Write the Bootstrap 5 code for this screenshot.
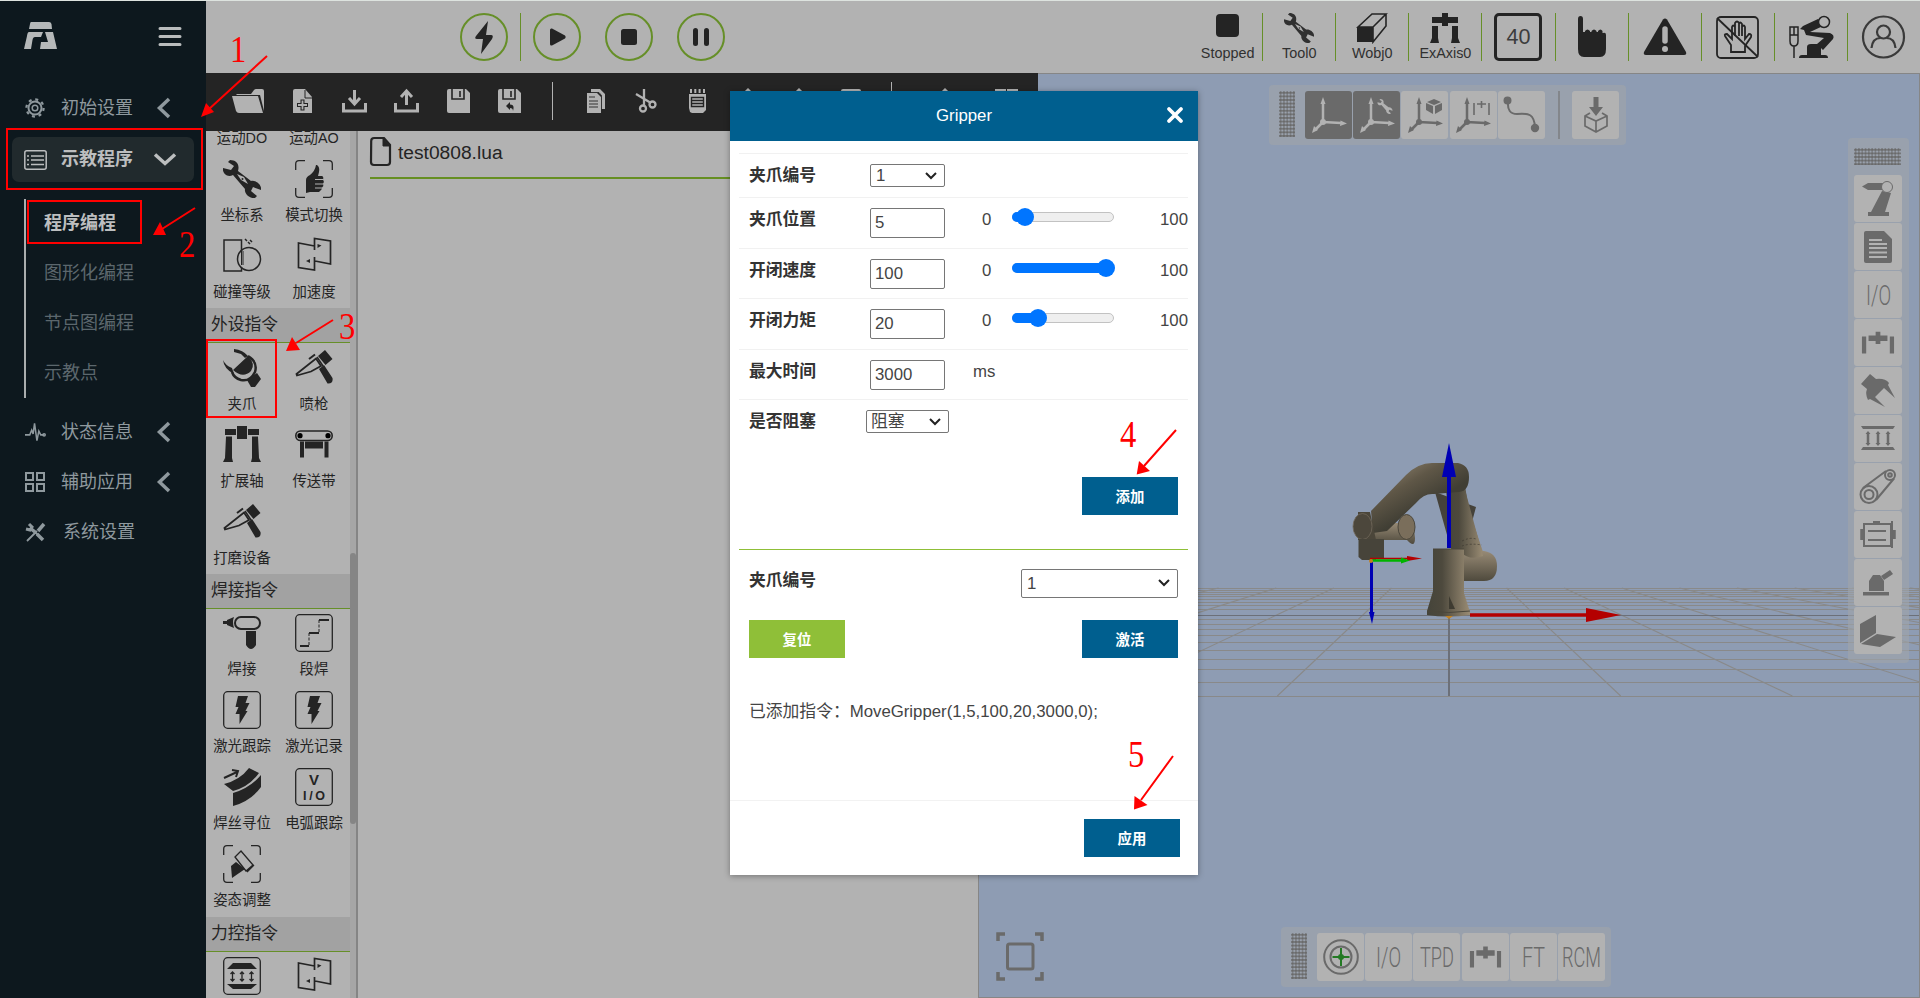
<!DOCTYPE html>
<html lang="zh-CN">
<head>
<meta charset="utf-8">
<meta name="viewport" content="width=device-width, initial-scale=1">
<title>示教程序</title>
<link href="https://cdn.jsdelivr.net/npm/bootstrap@5.3.0/dist/css/bootstrap.min.css" rel="stylesheet">
<style>
body{font-family:"Liberation Sans","Noto Sans CJK SC",sans-serif;color:#242424;background:#b2b2b2;width:1920px;height:998px;overflow:hidden;border-top:1px solid #dde3df}
svg{display:block;overflow:visible;flex:none}
/* sidebar */
.side{width:206px;background:#0d181e;color:#8f999e;font-size:18px;flex:none}
.side-top{height:82px;padding:21px 24px 0 24px}
.side-item{height:50px;padding-left:25px;position:relative}
.side-item .lbl{margin-left:16px;width:96px}
.side-item.on{width:182px;height:45px;margin:4px 0 0 12px;padding-left:12px;background:#212a2d;border-radius:7px;color:#bcbebf;font-weight:700}
.side-item.on .lbl{margin-left:14px;width:93px}
.side-sub{margin:17px 0 9px 24px;border-left:2px solid #a9adae;height:199px;color:#5c676d}
.side-sub a{display:flex;align-items:center;height:49.8px;padding-left:18px;color:inherit;text-decoration:none}
.side-sub a.on{color:#bcbebf;font-weight:700}
/* header */
.head{height:72px;background:#b2b2b2;flex:none}
.ring{width:48px;height:48px;border:2px solid #668f28;border-radius:50%}
.vsep{width:1px;height:48px;background:#668f28}
.stat{width:73.1px;height:48px;font-size:14.4px;line-height:15px;border-left:1px solid #668f28;color:#303030}
.stat:first-child{border-left:0}
.stat:not(:last-child){position:relative}
.speed{width:48px;height:48px;border:3px solid #242424;border-radius:5px;font-size:21.6px;line-height:42px;color:#3c3c3c}
/* editor side */
.left{width:772px;flex:none}
.tools{width:832px;height:58px;background:#242424;color:#b2b2b2;position:relative;z-index:2;padding:0 0 2px 26px;flex:none}
.tools .bar{width:1px;height:38px;background:#b2b2b2}
.palette{width:144px;overflow:hidden;flex:none}
.p-head{height:35px;background:#a2a2a2;border-bottom:1px solid #668f28;font-size:16.8px;line-height:33px;padding-left:5px}
.p-grid{display:grid;grid-template-columns:72px 72px}
.p-item{height:76.9px;padding-top:5.500px;display:flex;flex-direction:column;align-items:center;font-size:14.4px;line-height:21.6px;gap:7px;white-space:nowrap;color:#242424}
.p-item.cut{height:23.5px;padding-top:0;justify-content:flex-end;padding-bottom:5px}
.track{width:6px;background:#a6a6a6;padding-top:422px;flex:none}
.track i{display:block;height:271px;background:#858585;border-radius:3px}
.edge{width:2px;background:#858585;flex:none}
.tabline{margin-left:12px;height:48px;border-bottom:2px solid #668f22;font-size:19.2px;padding-bottom:11px}
/* 3D view */
.view{background:#8e9cb3;border:1px solid #868686;position:relative;overflow:hidden}
.scene{position:absolute;left:-1px;top:-1px}
.dock{position:absolute;background:rgba(160,165,170,.62);border-radius:4px;display:flex;color:#6a6a6a}
.dock .key{width:47px;height:47px;background:#b2b2b2;border-radius:3px;display:flex;align-items:center;justify-content:center}
.dock .key.dark{background:#6a6a6a;color:#b2b2b2}
.grip{background:radial-gradient(circle,#6a6a6a 1.2px,transparent 1.7px) 0 0/3.3px 3.6px}
.dock-top{left:290px;top:11px;width:357px;height:60px;padding:6px 0 0 10px}
.dock-right{left:869px;top:64px;width:61px;height:525px;padding-left:6px;padding-top:10px;flex-direction:column}
.dock-bottom{left:302px;top:853px;width:330px;height:60px;padding:6px 0 0 10px}
.dock-right .key{width:48px;margin-bottom:1px;flex:none}
.dock-top .key,.dock-bottom .key{height:48px;width:47px;margin-right:1.2px}
.frame{position:absolute;left:17px;top:858px}
/* dialog */
.dlg{position:absolute;left:730px;top:91px;width:468px;height:784px;background:#fff;z-index:5;box-shadow:0 1px 6px rgba(0,0,0,.35);font-size:16.8px;color:#333;display:flex;flex-direction:column}
.dlg-head{height:50px;background:#005f8f;color:#fff;position:relative;line-height:49px;flex:none}
.dlg-head svg{position:absolute;right:15.500px;top:16px}
.dlg-body{padding:12px 10px 0 9px;height:660px;border-bottom:1px solid #f2f2f2}
.f-row{display:grid;grid-template-columns:131px 75px 58px 102px 1fr;border-top:1px solid #f1f1f1;height:50.5px;align-items:start;padding-top:10px}
.f-row b{padding-left:10px;line-height:23px}
.f-row .n{line-height:23px;color:#444;margin-left:-1px}
.box{border:1px solid #767676;border-radius:2px;height:30px;line-height:28px;padding-left:4px;color:#444;background:#fff}
.sel{height:23px;line-height:21px;padding:0 7px 0 5px;display:flex;align-items:center;justify-content:space-between}
.rail{height:10px;margin-top:4px;border:1px solid #c2c2c2;background:#efefef;border-radius:5px;position:relative}
.rail i{position:absolute;left:-1px;top:-1px;height:10px;border-radius:5px;background:#0075ff}
.rail i::after{content:"";position:absolute;right:-9px;top:-4px;width:18px;height:18px;border-radius:50%;background:#0075ff}
.act{width:96px;height:38px;border:0;border-radius:0;background:#005f8f;color:#fff;font-weight:700;font-size:14.4px;padding:3px 0 0}
.act.go{background:#8fbf38}
.notes{position:absolute;left:0;top:-1px;z-index:9;pointer-events:none}
.notes text{font-family:"Liberation Serif",serif;font-size:38px;fill:#f00}
</style>
</head>
<body>
<svg width="0" height="0" class="position-absolute">
<defs>
<symbol id="wrench" viewBox="0 0 38 38"><path fill="currentColor" d="M0 8C-1 13 4 18 10 15L22 29C21 33 26 39 32 38L34 36 28 31 30 27 38 30C39 25 33 20 28 21L15 11C17 4 13 0 7 0L5 2 11 6 8 10Z"/><path fill="#b2b2b2" d="M14 14l7 3 4 7-7-4z"/><circle cx="19.500" cy="19" r="1" fill="currentColor"/></symbol>
<symbol id="corners" viewBox="0 0 38 38"><path fill="none" stroke="currentColor" stroke-width="1.300" d="M.7 10V4Q.7.7 4 .7h6M28 .7h6q3.300 0 3.300 3.300v6M37.300 28v6q0 3.300-3.300 3.300h-6M10 37.300H4Q.7 37.300.7 34v-6"/></symbol>
<symbol id="frame" viewBox="0 0 38 38"><rect x=".7" y=".7" width="36.600" height="36.600" rx="4" fill="none" stroke="currentColor" stroke-width="1.300"/></symbol>
<symbol id="accel" viewBox="0 0 38 38"><path fill="none" stroke="currentColor" stroke-width="1.700" d="M19.500 13V1.500L35.500 4v23l-15.500-3M19.500 9L3.500 6v24.500l16 2.500v-13"/><path d="M22.500 7l4 1.500-4 2.500zM15 22l-4 2 4 2z" fill="currentColor"/></symbol>
<symbol id="gun" viewBox="0 0 38 38"><path fill="none" stroke="currentColor" stroke-width="1.800" d="M1.500 25L21 9.500l5 7.500L16 22.500 2 26.500z"/><path stroke="currentColor" stroke-width="2" d="M14 10l6-4.500"/><path fill="currentColor" d="M23 7l7-6 7.500 9-7 6zM24 20l5-4 8.500 13q1 6-5 5.500z"/><path stroke="currentColor" stroke-width="1.500" d="M22 8l6 9"/></symbol>
<symbol id="gantry" viewBox="0 0 38 38"><path fill="currentColor" d="M14 0h10v13H14zM2 3h11v6H2zM25 3h11v6H25zM3 10.500h6V32l1 4H0l2-4zM29 10.500h6L36 32l2 4H28l1-4z"/></symbol>
<symbol id="bolt" viewBox="0 0 38 38"><path fill="currentColor" d="M15 5h10l-2.500 7h4l-4 8h2L16.500 33v-10h-4l3-7h-3z"/></symbol>
<symbol id="chev" viewBox="0 0 12 8"><path fill="none" stroke="#222" stroke-width="2" d="M1 1l5 5 5-5"/></symbol>
<symbol id="sgantry" viewBox="0 0 36 24"><path fill="currentColor" d="M1 5h4.500v18H1zM30.500 5H35v18h-4.500zM8 4h7.500V0h5v4H28v6h-7.500v3h-5v-3H8z"/></symbol>
<symbol id="axes" viewBox="0 0 36 36"><path fill="none" stroke="currentColor" stroke-width="2.500" d="M12 25V6M12 25l18 1M12 25L4 33"/><path fill="currentColor" d="M12 0l2.500 7h-5zM36 26.500l-7 2.500.5-5.500zM1 36l2-7 4 4z"/><circle cx="12" cy="25" r="3" fill="currentColor"/></symbol>
</defs>
</svg>

<div class="d-flex h-100">
  <nav class="side">
    <div class="side-top d-flex justify-content-between">
      <svg width="33" height="27" viewBox="0 0 33 27" fill="#b5b8b9"><path d="M7 0h18q2 0 2.500 2L28 7H5L6 2q.3-2 1-2zM5 10h14l-2 5h-6q-2 0-2.500 3L7 27H0L3 14q.5-4 2-4zM21 10h8l4 17H16l1-7h7z"/></svg>
      <svg width="24" height="20" viewBox="0 0 24 20" class="mt-1" stroke="#b9bcbd" stroke-width="3" stroke-linecap="round"><path d="M2 2.500h20M2 10.500h20M2 18.500h20"/></svg>
    </div>
    <div class="side-item d-flex align-items-center">
      <svg width="20" height="20" viewBox="0 0 20 20" fill="none" stroke="currentColor"><circle cx="10" cy="10" r="6.500" stroke-width="2"/><circle cx="10" cy="10" r="2.800" stroke-width="1.500"/><circle cx="10" cy="10" r="8.600" stroke-width="2.200" stroke-dasharray="3 3.750"/></svg>
      <span class="lbl">初始设置</span>
      <svg width="13" height="20" viewBox="0 0 13 20" fill="none" stroke="currentColor" stroke-width="3.500"><path d="M12 1L2.500 10 12 19"/></svg>
    </div>
    <div class="side-item on d-flex align-items-center">
      <svg width="23" height="20" viewBox="0 0 23 20" fill="none" stroke="currentColor" stroke-width="1.500"><rect x=".8" y=".8" width="21.400" height="18.400" rx="2"/><path d="M7 6h13M7 10h13M7 14.500h13M3 6h2M3 10h2M3 14.500h2"/></svg>
      <span class="lbl">示教程序</span>
      <svg width="22" height="13" viewBox="0 0 22 13" fill="none" stroke="currentColor" stroke-width="3.500"><path d="M1 1.500l10 9 10-9"/></svg>
    </div>
    <div class="side-sub"><a class="on">程序编程</a><a>图形化编程</a><a>节点图编程</a><a>示教点</a></div>
    <div class="side-item d-flex align-items-center">
      <svg width="21" height="20" viewBox="0 0 22 20" fill="none" stroke="currentColor" stroke-width="1.600"><path d="M0 13h5l2-5 1.500 4L10 1l2.500 18L14.500 9l2 4H20"/><circle cx="20" cy="13" r="1.200"/></svg>
      <span class="lbl" style="margin-left:15px">状态信息</span>
      <svg width="13" height="20" viewBox="0 0 13 20" fill="none" stroke="currentColor" stroke-width="3.500"><path d="M12 1L2.500 10 12 19"/></svg>
    </div>
    <div class="side-item d-flex align-items-center">
      <svg width="20" height="20" viewBox="0 0 20 20" fill="none" stroke="currentColor" stroke-width="2"><path d="M1 1h7v7H1zM12 1h7v7h-7zM1 12h7v7H1zM12 12h7v7h-7z"/></svg>
      <span class="lbl">辅助应用</span>
      <svg width="13" height="20" viewBox="0 0 13 20" fill="none" stroke="currentColor" stroke-width="3.500"><path d="M12 1L2.500 10 12 19"/></svg>
    </div>
    <div class="side-item d-flex align-items-center">
      <svg width="21" height="20" viewBox="0 0 21 20" stroke="currentColor" fill="none"><path stroke-width="3.500" d="M5 6l5 4M12 12l6 6M13 9l6-7"/><path stroke-width="1.800" d="M2 19l10-10M7 7l7 7"/><path stroke-width="3" d="M4 2l3 3-2 3-4-1"/></svg>
      <span class="lbl" style="margin-left:17px">系统设置</span>
    </div>
  </nav>

  <div class="flex-grow-1 d-flex flex-column">
    <header class="head d-flex align-items-center">
      <div class="d-flex align-items-center" style="padding-left:254px">
        <div class="ring d-flex align-items-center justify-content-center"><svg width="18" height="33" viewBox="0 0 18 33" fill="#242424"><path d="M13 0L1 15q-2 3 1 3h6L6 33 17 18q2-4-1-4h-5z"/></svg></div>
        <span class="vsep" style="margin:0 12px"></span>
        <div class="ring d-flex align-items-center justify-content-center"><svg width="16" height="18" viewBox="0 0 16 18" fill="#242424" style="margin-left:2px"><path d="M0 2q0-2 2-1.500l13 7q1.500 1.500 0 3L2 17.500Q0 18 0 16z"/></svg></div>
        <div class="ring d-flex align-items-center justify-content-center" style="margin:0 24px"><svg width="16" height="16"><rect width="16" height="16" rx="2.500" fill="#242424"/></svg></div>
        <div class="ring d-flex align-items-center justify-content-center"><svg width="16" height="18" fill="#242424"><rect width="5" height="18" rx="2.500"/><rect x="11" width="5" height="18" rx="2.500"/></svg></div>
      </div>
      <div class="d-flex ms-auto">
        <div class="stat d-flex flex-column align-items-center justify-content-end ps-1"><svg width="23" height="23" style="margin-bottom:9px"><rect width="23" height="23" rx="4" fill="#242424"/></svg>Stopped</div>
        <div class="stat d-flex flex-column align-items-center justify-content-end"><svg width="30" height="30" style="margin-bottom:3px"><use href="#wrench"/></svg>Tool0</div>
        <div class="stat d-flex flex-column align-items-center justify-content-end"><svg width="30" height="30" viewBox="0 0 30 30" style="margin-bottom:3px"><path d="M1 14L15 1h14L16 14zM29 1v12L16 29V14" fill="none" stroke="#242424" stroke-width="1.600"/><path d="M0 14h16v15H0z" fill="#242424"/></svg>Wobj0</div>
        <div class="stat d-flex flex-column align-items-center justify-content-end"><svg width="30" height="30" viewBox="0 0 30 30" style="margin-bottom:3px" fill="#242424"><path d="M12 0h6v4h10v6H18v3h-6v-3H2V4h10zM2 13h6v12l1 5H0l2-5zM22 13h6v12l2 5h-9l1-5z"/></svg>ExAxis0</div>
        <div class="stat d-flex align-items-center justify-content-center"><div class="speed text-center">40</div></div>
        <div class="stat d-flex align-items-center justify-content-center"><svg width="28" height="42" viewBox="0 0 28 42" fill="#242424"><path d="M0 3q0-3 2.500-3T5 3v13h2v-1q2.500-3 5 0v1h1.500v-1q2.500-3 5 0v1H20v-1q2.500-3 4.500 0v2h.5q3-1 3 2v14q0 8-6 8H6q-6 0-6-8z"/></svg></div>
        <div class="stat d-flex align-items-center justify-content-center"><svg width="44" height="38" viewBox="0 0 44 38"><path fill="#242424" d="M20 1.500q2-2 4 0L43 34q1 3-2 3H3q-3 0-2-3z"/><path d="M22 11v12" stroke="#b2b2b2" stroke-width="5.500" stroke-linecap="round"/><circle cx="22" cy="31" r="3" fill="#b2b2b2"/></svg></div>
        <div class="stat d-flex align-items-center justify-content-center"><svg width="43" height="43" viewBox="0 0 43 43" fill="none" stroke="#242424" stroke-width="1.800"><rect x="1" y="1" width="41" height="41" rx="4"/><path d="M1 2l41 39"/><path d="M15 36h14v-6l6-9q1-3-2-3l-4 5V11q-1-3-3 0v9-12q-2-3-3 0v12-13q-2-3-4 0v13-9q-2-3-3 0v12l-5-5q-3 0-2 2l6 9z"/></svg></div>
        <div class="stat d-flex align-items-center justify-content-center"><svg width="44" height="43" viewBox="0 0 44 43" fill="#242424"><path d="M10 42q0-3 3-3h23q3 0 3 3zM18 40V31q0-3 4-3h6q4 0 4 3v9zM11 13l3-3 15-7 5 7-13 6 20 1q5 2 3 6L34 34l-6-6 7-6-18-3-2-5z"/><circle cx="35" cy="6" r="5.500" fill="#b2b2b2" stroke="#242424" stroke-width="1.500"/><path d="M1 11h8v14q0 5-4 5t-4-5zM1 19h8M5 11v8M5 30v12" fill="none" stroke="#242424" stroke-width="1.500"/></svg></div>
        <div class="stat d-flex align-items-center justify-content-center"><svg width="44" height="44" viewBox="0 0 44 44" fill="none" stroke="#3a3a3a" stroke-width="2.200"><circle cx="21.500" cy="22" r="20.500"/><circle cx="21.500" cy="17" r="6.500"/><path d="M9.500 33q1-10 9-10M33.500 33q-1-10-9-10"/></svg></div>
      </div>
    </header>

    <div class="d-flex flex-grow-1" style="min-height:0">
      <div class="left d-flex flex-column">
        <div class="tools d-flex align-items-center">
          <svg width="32" height="24" viewBox="0 0 32 24" fill="currentColor"><path d="M4 5h15l3-4q1-1 2-1h6q2 0 2 2v20l-4-16H5zM0 7h26l5 17H7q-2 0-3-2z"/></svg>
          <svg width="19" height="24" viewBox="0 0 19 24" style="margin-left:29px"><path fill="currentColor" d="M0 2q0-2 2-2h10l7 8v16H0z"/><path d="M9.500 10.500v11M4 16h11" stroke="#242424" stroke-width="4"/><path d="M9.500 11.500v9M5 16h9" stroke="currentColor" stroke-width="1.800"/><path d="M12 1v8h7" stroke="#242424" fill="none"/></svg>
          <svg width="25" height="24" viewBox="0 0 25 24" style="margin-left:30px" fill="none" stroke="currentColor" stroke-width="3"><path d="M1.500 14v8h22v-8M12.500 1v13M7 9l5.500 6L18 9"/></svg>
          <svg width="25" height="24" viewBox="0 0 25 24" style="margin-left:27px" fill="none" stroke="currentColor" stroke-width="3"><path d="M1.500 14v8h22v-8M12.500 16V3M7 8l5.500-6L18 8"/></svg>
          <svg width="23" height="24" viewBox="0 0 23 24" style="margin-left:28px"><path fill="currentColor" d="M0 2q0-2 2-2h17l4 4v20H2q-2 0-2-2z"/><path d="M5 0v10h12V0M13 2v6" fill="none" stroke="#242424" stroke-width="1.600"/></svg>
          <svg width="23" height="24" viewBox="0 0 23 24" style="margin-left:28px"><path fill="currentColor" d="M0 2q0-2 2-2h17l4 4v20H2q-2 0-2-2z"/><path d="M5 0v10h12V0M13 2v6" fill="none" stroke="#242424" stroke-width="1.600"/><path d="M8 17l4-4v2.500q5 0 3 6.500 0-3-3-3v2z" fill="#242424"/></svg>
          <span class="bar" style="margin:0 34px 0 31px"></span>
          <svg width="18" height="24" viewBox="0 0 18 24"><path fill="currentColor" d="M4 0h9l5 5v15h-3V7l-4-4H4zM0 4h10l4 4v16H0z"/><path d="M2 8h6M2 12h9M2 15h9M2 18h9M4 3.500h8l2.500 3V20" stroke="#333" stroke-width="1" fill="none"/></svg>
          <svg width="22" height="24" viewBox="0 0 22 24" style="margin-left:30px" fill="none" stroke="currentColor" stroke-width="2.300"><path d="M1 5l15 9M9 0l0 17"/><circle cx="17.500" cy="15.500" r="3"/><circle cx="8" cy="19.500" r="3"/></svg>
          <svg width="17" height="24" viewBox="0 0 17 24" style="margin-left:32px"><path fill="currentColor" d="M0 5h17v16l-3 3H3l-2-1-1-4z"/><path d="M2 0v4M6.300 0v4M10.600 0v4M15 0v4" stroke="currentColor" stroke-width="2"/><path d="M2.500 8.500h12v9h-12zM3 11.500h11M3 14.500h11" fill="none" stroke="#242424" stroke-width="1.400"/></svg>
          <svg width="12" height="24" viewBox="0 0 12 24" style="margin-left:36px" fill="none" stroke="currentColor" stroke-width="3"><path d="M6 24V2M1 6l5-5 5 5"/></svg>
          <svg width="12" height="24" viewBox="0 0 12 24" style="margin-left:39px" fill="none" stroke="currentColor" stroke-width="3"><path d="M6 24V2M1 6l5-5 5 5"/></svg>
          <svg width="20" height="24" style="margin-left:36px"><rect width="20" height="24" rx="2" fill="currentColor"/></svg>
          <span class="bar" style="margin:0 47px 0 30px"></span>
          <svg width="12" height="24" viewBox="0 0 12 24" fill="none" stroke="currentColor" stroke-width="3"><path d="M6 24V2M1 6l5-5 5 5"/></svg>
          <svg width="23" height="24" viewBox="0 0 23 24" style="margin-left:44px" fill="none" stroke="currentColor" stroke-width="2"><path d="M1 1h9v8H1zM13 1h9v8h-9zM1 14h9v8H1z"/></svg>
        </div>
        <div class="d-flex flex-grow-1" style="min-height:0">
          <div class="palette">
            <div class="p-grid">
              <div class="p-item cut">运动DO</div><div class="p-item cut">运动AO</div>
              <div class="p-item"><svg width="38" height="38"><use href="#wrench"/></svg>坐标系</div>
              <div class="p-item"><svg width="38" height="38"><use href="#corners"/><path fill="#242424" d="M11 20q0-3 4-5 5-4 6-10h1q3 2 2 7l-1 4h4q2 1 1 3.500 1.500 2 0 4 1 2-1 4 0 2-2 3.500l-1 1h-9l-4 1z"/><path d="M20 19.500h8M20 24h8M20 28h7" stroke="#b2b2b2"/></svg>模式切换</div>
              <div class="p-item"><svg width="38" height="38" fill="none" stroke="#242424" stroke-width="1.500"><path d="M18.500 14V3H1v31h17.500v-4"/><circle cx="26" cy="22" r="11.500"/><path d="M18.500 14v14M20 14v14" stroke-width="1"/><path d="M22 2l2 2M25 5l2 2M27 3l2 2"/></svg>碰撞等级</div>
              <div class="p-item"><svg width="38" height="38"><use href="#accel"/></svg>加速度</div>
            </div>
            <div class="p-head">外设指令</div>
            <div class="p-grid">
              <div class="p-item"><svg width="38" height="38"><path fill="#242424" d="M11 0q9 1 14 7l-3 2-4-4-7-2zM0 11q2 5 9 8l2 6Q1 20 0 11zM10 21L25 7q8 8 3 15-8 8-18-1z"/><path d="M25 7q10 6 7 16-5 10-14 8-7-2-9-8" fill="none" stroke="#242424" stroke-width="2.500"/><path fill="#242424" d="M24 31l10-7 4 6-6 8h-4z"/></svg>夹爪</div>
              <div class="p-item"><svg width="38" height="38"><use href="#gun"/></svg>喷枪</div>
              <div class="p-item"><svg width="38" height="38"><use href="#gantry"/></svg>扩展轴</div>
              <div class="p-item"><svg width="38" height="38"><rect x=".8" y="5" width="36.400" height="9.500" rx="4.700" fill="none" stroke="#242424" stroke-width="1.600"/><circle cx="5" cy="9.700" r="2.600"/><circle cx="33" cy="9.700" r="2.600"/><path fill="#242424" d="M5 15.500h4v16H5zM10 15.500h18v7H10zM29.500 15.500h4v16h-4z"/></svg>传送带</div>
              <div class="p-item"><svg width="38" height="38"><use href="#gun"/></svg>打磨设备</div>
            </div>
            <div class="p-head">焊接指令</div>
            <div class="p-grid">
              <div class="p-item"><svg width="38" height="38"><rect x="12" y="3" width="25" height="12" rx="6" fill="none" stroke="#242424" stroke-width="2"/><path fill="#242424" d="M23 17h10v14q-5 8-10 0zM0 7h4V6l7-3q-2 5 0 11l-7-3v-1H0z"/></svg>焊接</div>
              <div class="p-item"><svg width="38" height="38"><use href="#frame"/><path d="M5 32h9M14 19h10M24 6h10" stroke="#242424" stroke-width="2"/><path d="M14 31V19M24 18V6" stroke="#242424" stroke-dasharray="3 1.500"/></svg>段焊</div>
              <div class="p-item"><svg width="38" height="38"><use href="#frame"/><use href="#bolt"/></svg>激光跟踪</div>
              <div class="p-item"><svg width="38" height="38"><use href="#frame"/><use href="#bolt"/></svg>激光记录</div>
              <div class="p-item"><svg width="38" height="38"><path fill="#242424" d="M1 16Q17 12 26 0l10 5Q26 19 10 23zM10 25Q27 20 38 7v12Q28 33 10 38z"/><path d="M1 10l13-6M9 2l6 1-2 6" fill="none" stroke="#242424" stroke-width="2"/></svg>焊丝寻位</div>
              <div class="p-item"><svg width="38" height="38" fill="#242424" font-weight="700" text-anchor="middle"><use href="#frame"/><text x="19" y="17" font-size="15">V</text><text x="19" y="32" font-size="12.500" textLength="22">I/O</text></svg>电弧跟踪</div>
              <div class="p-item"><svg width="38" height="38"><use href="#corners"/><path d="M8 21l5-4 9 7-13 9z" fill="#242424"/><path d="M12 12l6-6 12 14-7 6zM24 27l7-7" fill="#b2b2b2" stroke="#242424" stroke-width="1.300"/></svg>姿态调整</div>
            </div>
            <div class="p-head">力控指令</div>
            <div class="p-grid">
              <div class="p-item"><svg width="38" height="38"><use href="#frame"/><path fill="#242424" d="M10 6h18l6 6H4zM4 27h30l-6 5H10z"/><path d="M9.500 15v9M19 15v9M28.500 15v9M7.500 17l2-2 2 2M17 17l2-2 2 2M26.500 17l2-2 2 2M7.500 22l2 2 2-2M17 22l2 2 2-2M26.500 22l2 2 2-2" fill="none" stroke="#242424" stroke-width="1.300"/></svg></div>
              <div class="p-item"><svg width="38" height="38"><use href="#accel"/></svg></div>
            </div>
          </div>
          <div class="track"><i></i></div>
          <div class="edge"></div>
          <div class="flex-grow-1">
            <div class="tabline d-flex align-items-end"><svg width="21" height="29" viewBox="0 0 21 29" style="margin-right:7px" fill="none" stroke="#242424" stroke-width="2.200"><path d="M1.200 4q0-3 3-3H14l6 7v17q0 3-3 3H4q-3 0-3-3z"/><path d="M13 1v8h7z" fill="#242424" stroke-width="1"/></svg><span style="line-height:26px">test0808.lua</span></div>
          </div>
        </div>
      </div>

      <main class="view flex-grow-1">
        <svg class="scene" width="942" height="925" viewBox="978 73 942 925">
          <defs>
            <linearGradient id="g1"><stop offset="0" stop-color="#45443a"/><stop offset=".35" stop-color="#4d493d"/><stop offset="1" stop-color="#9a8c74"/></linearGradient>
            <linearGradient id="g2" x1="0" y1="0" x2=".65" y2=".8"><stop offset=".1" stop-color="#8f836f"/><stop offset=".45" stop-color="#5f5747"/><stop offset=".8" stop-color="#403e34"/></linearGradient>
            <linearGradient id="g3" x1="0" y1="0" x2="0" y2="1"><stop offset="0" stop-color="#978a75"/><stop offset="1" stop-color="#4f4a3d"/></linearGradient>
          </defs>
          <path stroke="#898989" stroke-width="1" fill="none" d="M978 588.500H1920M978 590.500H1920M978 592.500H1920M978 594.500H1920M978 596.500H1920M978 599.500H1920M978 602.500H1920M978 605.500H1920M978 609.500H1920M978 619.500H1920M978 624.500H1920M978 629.500H1920M978 635.500H1920M978 642.500H1920M978 650.500H1920M978 659.500H1920M978 669.500H1920M978 682.500H1920M978 696.500H1920"/>
          <path stroke="#898989" stroke-width="1.100" fill="none" d="M1391.400 588L1277.300 696M1333.800 588L1105.600 696M1276.200 588L933.900 696M1218.600 588L762.200 696M1161 588L590.500 696M1103.400 588L418.800 696M1045.800 588L247.100 696M988.200 588L75.400 696M1506.600 588L1620.700 696M1564.200 588L1792.400 696M1621.800 588L1964.100 696M1679.400 588L2135.800 696M1737 588L2307.500 696M1794.600 588L2479.200 696M1852.200 588L2650.900 696M1909.800 588L2822.600 696"/>
          <path stroke="#6c7079" d="M978 615.500H1920"/><path stroke="#6c7079" stroke-width="2" d="M1449 610v86"/>
          <!-- upper arm -->
          <path fill="#45423a" d="M1435 492l14 50 15 10 12-45z"/>
          <path fill="url(#g1)" d="M1450 480h14l5 30 15 45-2 12-28-4-6-30z"/>
          <path fill="url(#g3)" d="M1462 551h22q13 2 13 15 0 15-13 15h-22z"/>
          <path fill="url(#g1)" d="M1446 490l18-4 19 70q-14 5-22-4l-10-14z"/>
          <path fill="none" stroke="#3d3a30" stroke-width=".7" stroke-dasharray="2 2" d="M1450 492q8-2 15-2M1462 541q8-4 14-2M1462 546q8-3 20-1"/>
          <!-- elbow and forearm -->
          <path fill="url(#g3)" d="M1370 523h37q8 4 8 15t-8 2h-37z"/>
          <path fill="url(#g2)" d="M1371 511L1406 475Q1418 463 1432 463h26q11 2 11 14 0 14-10 15l-25 2q-10-1-18 9l-29 28-14 2z"/>
          <path fill="#4b463a" d="M1358 512h12l6 28h-18z"/>
          <ellipse cx="1362.500" cy="526.500" rx="9.500" ry="13" fill="#4c473c" stroke="#71685a" stroke-width=".8"/>
          <ellipse cx="1406.500" cy="527" rx="8.500" ry="12.500" fill="#7a6e5b" stroke="#4a463b"/>
          <path fill="#47443a" d="M1358.500 539h25.500v19h-8v2h-14l-3.500-3z"/>
          <!-- base -->
          <path fill="url(#g1)" d="M1433 549h31v44l6 19v3q-22 3-43 0v-4l6-20z"/><path fill="#3e3b31" d="M1449 596l6 13h-6z"/><path fill="none" stroke="#4a463a" d="M1427 611q22 3 43 0M1433 549h31"/>
          <!-- axes -->
          <path stroke="#b40000" stroke-width="3.500" d="M1470 615h118"/><path fill="#b40000" d="M1586 608l35 7-35 7z"/>
          <path stroke="#0000b4" stroke-width="4" d="M1449 548v-75"/><path fill="#0000b4" d="M1442 477l7-34 7 34z"/>
          <path stroke="#b40000" stroke-width="1.500" d="M1370 558.500h40"/><path fill="#b40000" d="M1407 556l15 2.500-15 2.500z"/>
          <path stroke="#00b400" stroke-width="2.500" d="M1371 560.500h35"/><path fill="#00b400" d="M1401 557.500l9 3-9 3z"/>
          <path stroke="#0000b4" stroke-width="3" d="M1371.500 562v52"/><path fill="#0000b4" d="M1369 612h5.500l-2.500 12z"/>
          <circle cx="1371" cy="561" r="2" fill="#c08020"/><path fill="#c08020" d="M1445 616h8l-4 3z"/>
        </svg>

        <div class="dock dock-top">
          <div class="grip" style="width:16px;height:46px;margin-right:10px"></div>
          <div class="key dark"><svg width="36" height="36"><use href="#axes"/></svg></div>
          <div class="key dark"><svg width="36" height="36"><use href="#axes"/><svg x="18" y="2" width="16" height="15"><use href="#wrench"/></svg></svg></div>
          <div class="key"><svg width="36" height="36"><use href="#axes"/><path fill="currentColor" d="M20 5l7-3 7 3-7 3zM19 6l7 3v8l-7-4zM35 6l-7 3v8l7-4z"/></svg></div>
          <div class="key"><svg width="36" height="36"><use href="#axes"/><svg x="18" y="3" width="17" height="16" viewBox="0 0 17 16" fill="none" stroke="currentColor" stroke-width="1.600"><path d="M1 3v12M16 3v12M4 4h9M8.500 1v7"/></svg></svg></div>
          <div class="key"><svg width="36" height="36" fill="none" stroke="currentColor" stroke-width="2"><path d="M5 5q-1 12 9 12c12-1 17 0 18 13"/><circle cx="4.500" cy="3.500" r="3" fill="currentColor"/><circle cx="32" cy="31" r="3.200" fill="currentColor"/></svg></div>
          <div style="width:1.500px;height:48px;background:#83868b;margin:0 12.500px"></div>
          <div class="key"><svg width="24" height="36" viewBox="0 0 24 36"><path fill="currentColor" d="M9.500 0h5v10H19l-7 9-7-9h4.500z"/><path fill="none" stroke="currentColor" stroke-width="1.700" d="M6 16l-5 3v10l11 6 11-6V19l-5-3M1 19l11 5 11-5M12 24v11"/></svg></div>
        </div>

        <div class="dock dock-right">
          <div class="grip" style="width:47px;height:17px;margin-bottom:10px;flex:none"></div>
          <div class="key"><svg width="32" height="36" viewBox="0 0 32 36" fill="currentColor"><path d="M0 5.500l6-3.500h15v7H6zM20 10l9 2-6 19h4v4H6v-4h3z"/><circle cx="25" cy="6" r="5.500" fill="#b2b2b2" stroke="currentColor"/></svg></div>
          <div class="key"><svg width="28" height="32" viewBox="0 0 28 32"><path fill="currentColor" d="M2 0h18l8 8v22q0 2-2 2H2q-2 0-2-2V2q0-2 2-2z"/><path d="M5 9h13M5 13h18M5 17h18M5 21.500h18M5 26h18" stroke="#b2b2b2" stroke-width="2"/></svg></div>
          <div class="key"><svg width="25" height="20"><text x="0" y="19.500" font-family="Roboto" font-weight="300" font-size="27" textLength="25" lengthAdjust="spacingAndGlyphs" fill="currentColor">I/O</text></svg></div>
          <div class="key"><svg width="34" height="24"><use href="#sgantry"/></svg></div>
          <div class="key"><svg width="34" height="34" fill="currentColor"><path d="M0 10L9 0l6 5q9-1 13 4l-1 2 7 13-11-10-9 9 10 10-15-8-2 1q-3-6-1-11z"/></svg></div>
          <div class="key"><svg width="34" height="25" fill="currentColor"><path d="M0 0h34l-2 3H2zM2 21h30l2 3H0z"/><path d="M7 7v11M17 7v11M27 7v11" stroke="currentColor" stroke-width="2.500"/><path d="M4.500 8L7 5l2.500 3zM14.500 8L17 5l2.500 3zM24.500 8L27 5l2.500 3zM4.500 17L7 20l2.500-3zM14.500 17l2.500 3 2.500-3zM24.500 17l2.500 3 2.500-3z"/></svg></div>
          <div class="key"><svg width="36" height="35" fill="none" stroke="currentColor" stroke-width="2"><circle cx="9" cy="25.500" r="8.500"/><circle cx="9" cy="25.500" r="4.500"/><circle cx="30" cy="6" r="5"/><circle cx="30" cy="6" r="1.800"/><path d="M3 19L26 2M16 31L34 9.500"/></svg></div>
          <div class="key"><svg width="36" height="29" fill="none" stroke="currentColor" stroke-width="2"><path d="M4 4h27v22H4zM8 11h18M8 20h18M13 2h7M32 1v27" /><path d="M2 9v11M34 10v9" stroke-width="3.500"/></svg></div>
          <div class="key"><svg width="30" height="26" fill="currentColor"><path d="M0 22h26v3.500H0zM6 21V11l4-6h7l4 6v10zM18 6l9-6 3 4-9 6z"/></svg></div>
          <div class="key"><svg width="36" height="32" fill="currentColor"><path d="M0 9L16 0v18L0 28zM17 19l19 3-16 10-19-3z"/></svg></div>
        </div>

        <svg class="frame" width="48" height="49" viewBox="0 0 48 49" fill="none" stroke="#6a6a6a"><path stroke-width="3.500" d="M2 9V2h7M39 2h7v7M46 40v7h-7M9 47H2v-7"/><rect x="11.500" y="12" width="25.500" height="25" rx="2" stroke-width="3"/></svg>

        <div class="dock dock-bottom">
          <div class="grip" style="width:16px;height:46px;margin-right:10px"></div>
          <div class="key"><svg width="36" height="36" fill="none" stroke="#6a6a6a" stroke-width="2"><circle cx="18" cy="18" r="16.800"/><circle cx="18" cy="18" r="10.500"/><path stroke="#247a24" d="M18 9v18M9.500 18h17"/><circle cx="18" cy="18" r="3" fill="#247a24" stroke="none"/></svg></div>
          <div class="key"><svg width="25" height="20"><text y="20" font-family="Roboto" font-weight="300" font-size="28" textLength="25" lengthAdjust="spacingAndGlyphs" fill="currentColor">I/O</text></svg></div>
          <div class="key"><svg width="34" height="20"><text y="20" font-family="Roboto" font-weight="300" font-size="28" textLength="34" lengthAdjust="spacingAndGlyphs" fill="currentColor">TPD</text></svg></div>
          <div class="key"><svg width="33" height="23"><use href="#sgantry"/></svg></div>
          <div class="key"><svg width="23" height="20"><text y="20" font-family="Roboto" font-weight="300" font-size="28" textLength="23" lengthAdjust="spacingAndGlyphs" fill="currentColor">FT</text></svg></div>
          <div class="key"><svg width="39" height="20"><text y="20" font-family="Roboto" font-weight="300" font-size="28" textLength="39" lengthAdjust="spacingAndGlyphs" fill="currentColor">RCM</text></svg></div>
        </div>
      </main>
    </div>
  </div>
</div>

<section class="dlg" role="dialog">
  <div class="dlg-head text-center">Gripper<svg width="16" height="16" viewBox="0 0 16 16" stroke="#fff" stroke-width="3.800" stroke-linecap="round"><path d="M2 2l12 12M14 2L2 14"/></svg></div>
  <div class="dlg-body">
    <div class="f-row" style="height:44px"><b>夹爪编号</b><div class="box sel">1<svg width="12" height="8"><use href="#chev"/></svg></div></div>
    <div class="f-row"><b>夹爪位置</b><div class="box">5</div><span class="n" style="padding-left:38px">0</span><span style="padding-left:9px;margin-right:-9px"><span class="rail d-block"><i style="width:13px"></i></span></span><span class="n text-end">100</span></div>
    <div class="f-row"><b>开闭速度</b><div class="box">100</div><span class="n" style="padding-left:38px">0</span><span style="padding-left:9px;margin-right:-9px"><span class="rail d-block"><i style="width:94px"></i></span></span><span class="n text-end">100</span></div>
    <div class="f-row"><b>开闭力矩</b><div class="box">20</div><span class="n" style="padding-left:38px">0</span><span style="padding-left:9px;margin-right:-9px"><span class="rail d-block"><i style="width:26px"></i></span></span><span class="n text-end">100</span></div>
    <div class="f-row"><b>最大时间</b><div class="box">3000</div><span class="n" style="padding-left:29px">ms</span></div>
    <div class="f-row"><b>是否阻塞</b><div class="box sel" style="margin:0 -4px;padding-left:4px">阻塞<svg width="12" height="8"><use href="#chev"/></svg></div></div>
    <div class="d-flex justify-content-end" style="padding:27.500px 10px 0 0;height:100px;border-bottom:1px solid #8fbf38"><button class="act btn">添加</button></div>
    <div class="d-flex justify-content-between" style="padding:19px 10px 0 10px;height:70.500px"><b style="line-height:24px">夹爪编号</b><div class="box sel" style="width:157px;height:29px">1<svg width="12" height="8"><use href="#chev"/></svg></div></div>
    <div class="d-flex justify-content-between" style="padding:0 10px"><button class="act go btn">复位</button><button class="act btn">激活</button></div>
    <div style="padding:42px 0 0 10px;line-height:24px;color:#444">已添加指令：MoveGripper(1,5,100,20,3000,0);</div>
  </div>
  <div class="d-flex justify-content-end flex-grow-1" style="padding:18px 18px 0 0"><button class="act btn">应用</button></div>
</section>

<svg class="notes" width="1920" height="998" fill="none" stroke="#f00" stroke-width="2">
  <path d="M7 130h195v60H7zM28 202h113v42H28zM207 341h69v77h-69z"/>
  <path d="M267 57L208 111M195 209L162 230M333 321L296 344M1176 431L1144 467M1173 757L1141 801"/>
  <path fill="#f00" stroke="none" d="M201 118l5-14 8 9zM153 236l7-13 6 13zM286 352l6-14 8 13zM1136.700 475.500l2.300-13.500 11 10zM1134 810.500l.5-13.500 13 9z"/>
  <g stroke="none">
    <text transform="translate(230 63) scale(.86 1)">1</text>
    <text transform="translate(179 258) scale(.86 1)">2</text>
    <text transform="translate(339 340) scale(.86 1)">3</text>
    <text transform="translate(1120 448) scale(.86 1)">4</text>
    <text transform="translate(1128 768) scale(.86 1)">5</text>
  </g>
</svg>
<script src="https://cdn.jsdelivr.net/npm/bootstrap@5.3.0/dist/js/bootstrap.bundle.min.js"></script>
</body>
</html>
